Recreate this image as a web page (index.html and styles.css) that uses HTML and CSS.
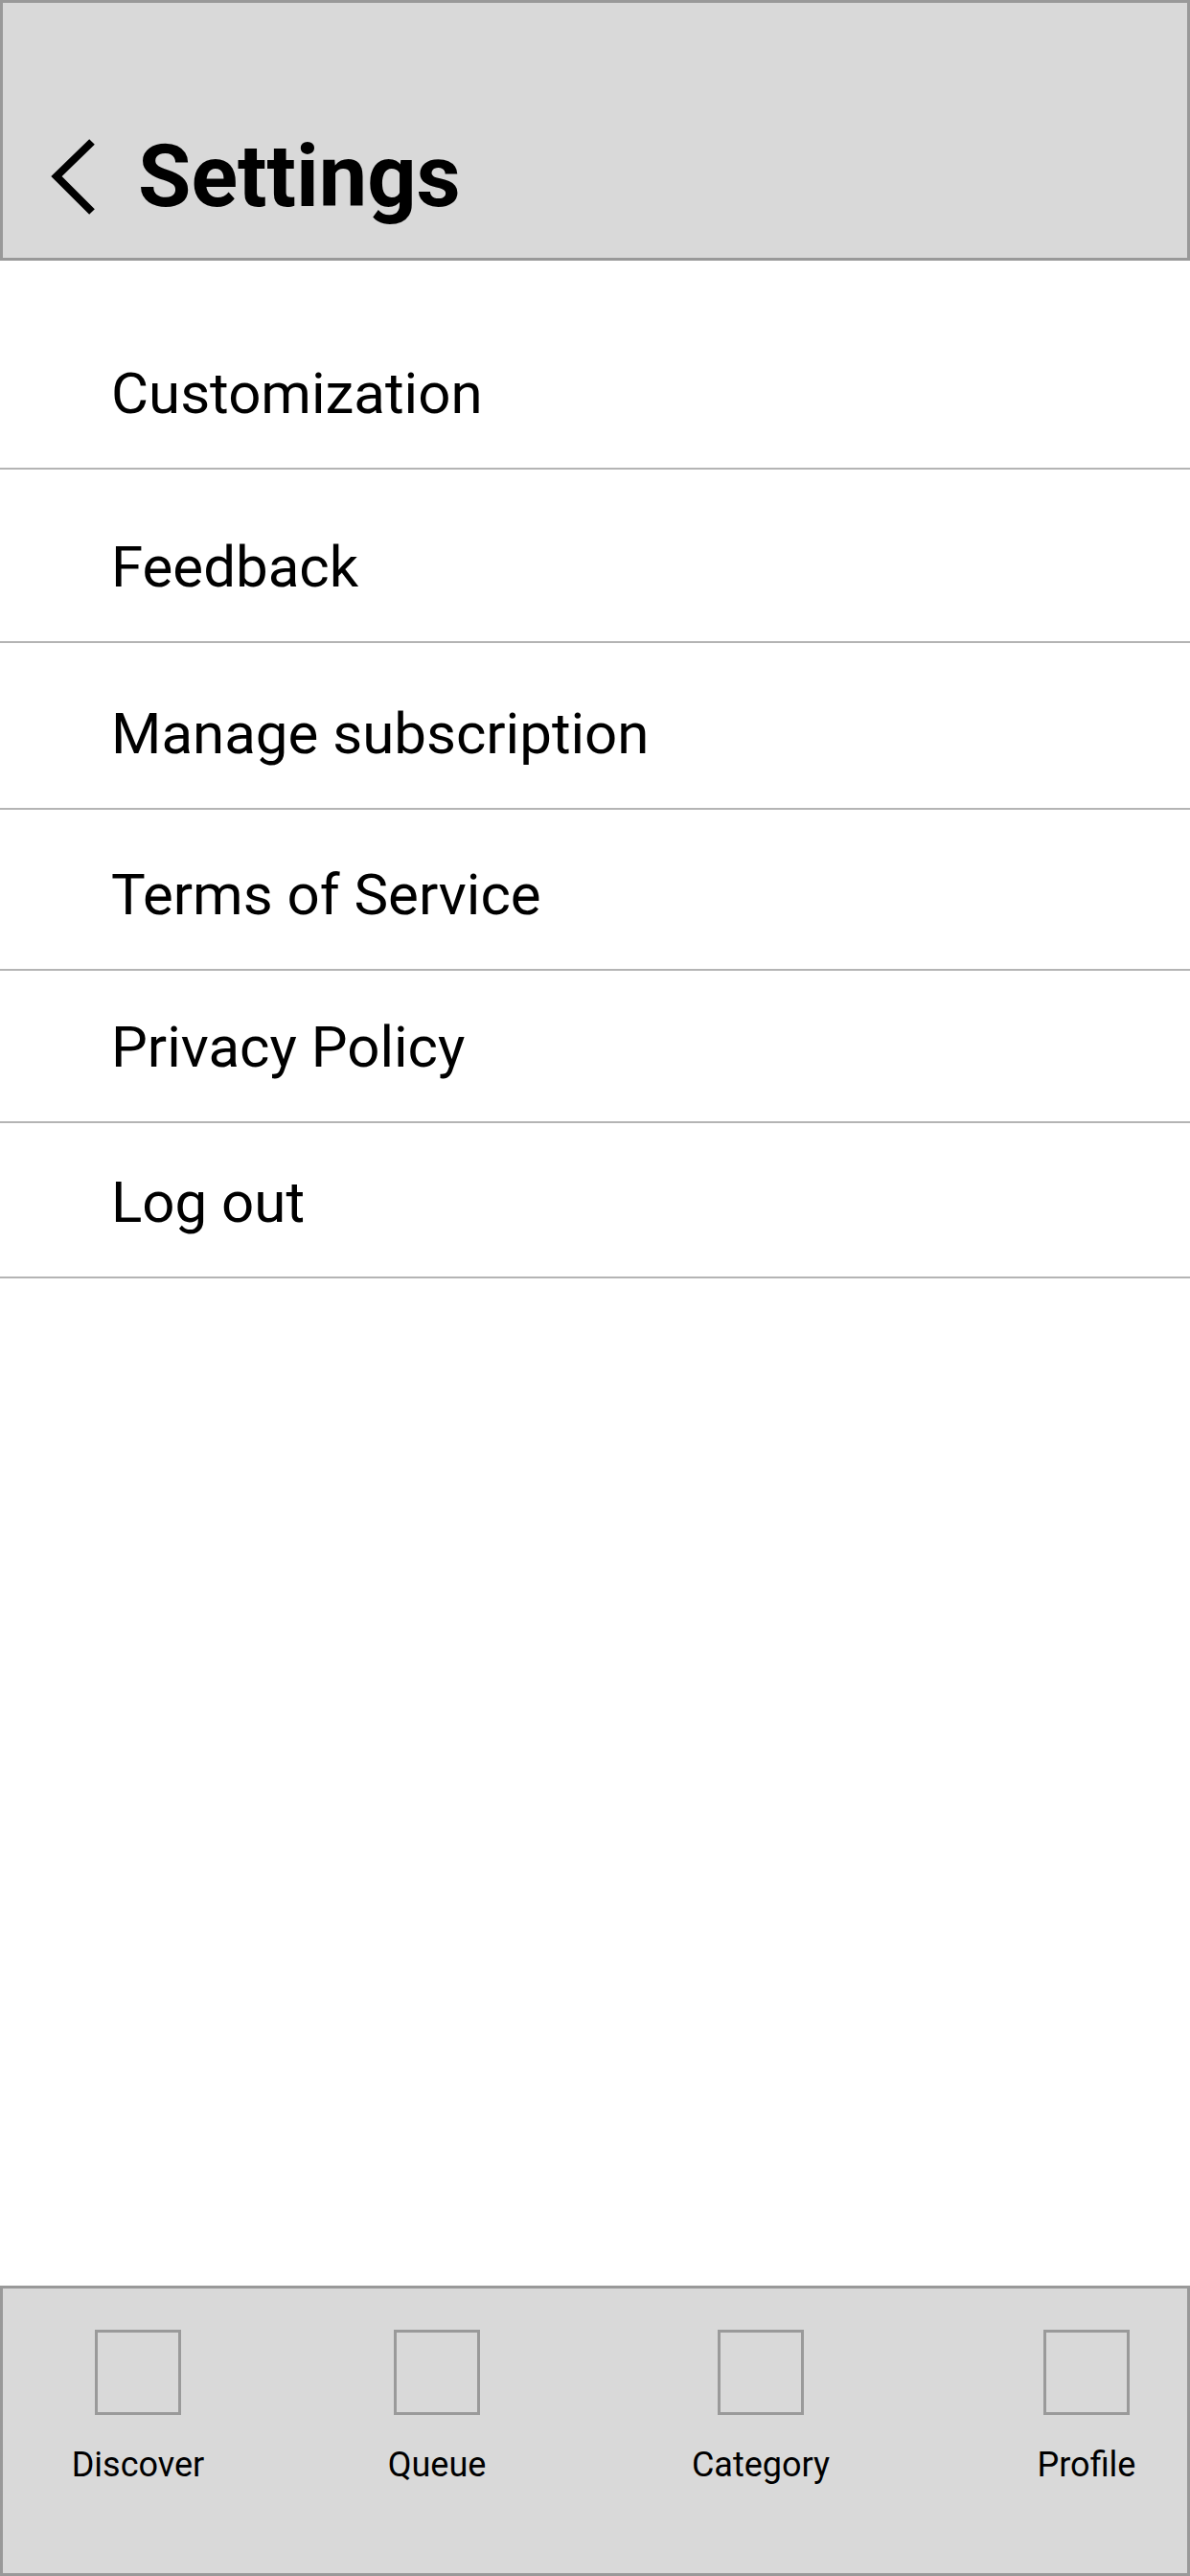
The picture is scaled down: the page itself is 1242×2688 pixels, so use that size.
FILE: index.html
```html
<!DOCTYPE html>
<html lang="en">
<head>
<meta charset="utf-8">
<title>Settings</title>
<link rel="stylesheet" href="styles.css">
</head>
<body>
<div class="screen">
  <header class="topbar">
    <svg class="back" viewBox="0 0 52 84" width="52" height="84" aria-hidden="true">
      <path d="M48 5 L11 41 L48 78" fill="none" stroke="#000" stroke-width="8" stroke-linecap="butt" stroke-linejoin="miter"/>
    </svg>
    <h1 class="title">Settings</h1>
  </header>
  <main class="content">
    <ul class="menu">
      <li class="menu-item menu-item--1">Customization</li>
      <li class="menu-item menu-item--2">Feedback</li>
      <li class="menu-item menu-item--3">Manage subscription</li>
      <li class="menu-item menu-item--4">Terms of Service</li>
      <li class="menu-item menu-item--5">Privacy Policy</li>
      <li class="menu-item menu-item--6">Log out</li>
    </ul>
  </main>
  <nav class="tabbar">
    <div class="tab"><span class="tab-icon"></span><span class="tab-label">Discover</span></div>
    <div class="tab"><span class="tab-icon"></span><span class="tab-label">Queue</span></div>
    <div class="tab"><span class="tab-icon"></span><span class="tab-label">Category</span></div>
    <div class="tab tab--last"><span class="tab-icon"></span><span class="tab-label">Profile</span></div>
  </nav>
</div>
</body>
</html>
```
FILE: styles.css
```css
* { box-sizing: border-box; }
html, body {
  margin: 0;
  padding: 0;
  background: #ffffff;
}
body {
  font-family: Roboto, "Liberation Sans", Arial, sans-serif;
  color: #000;
}
.screen {
  width: 1242px;
  height: 2688px;
  display: flex;
  flex-direction: column;
}
.topbar {
  height: 272px;
  flex: 0 0 auto;
  background: #d9d9d9;
  border: 3px solid #999999;
  display: flex;
  align-items: flex-end;
  padding: 0 0 42px 45px;
}
.back {
  display: block;
  flex: 0 0 auto;
  margin-right: 44px;
}
.title {
  margin: 0;
  font-size: 90px;
  line-height: 84px;
  font-weight: 700;
  letter-spacing: 0;
}
.content {
  flex: 1 1 auto;
}
.menu {
  list-style: none;
  margin: 0;
  padding: 0;
}
.menu-item {
  font-size: 60px;
  line-height: 70px;
  padding-left: 116px;
  padding-bottom: 42px;
  border-bottom: 2px solid #b4b4b4;
}
.menu-item--1 { padding-top: 104px; }
.menu-item--2 { padding-top: 67px; }
.menu-item--3 { padding-top: 60px; }
.menu-item--4 { padding-top: 54px; }
.menu-item--5 { padding-top: 45px; }
.menu-item--6 { padding-top: 48px; }
.tabbar {
  flex: 0 0 auto;
  height: 303px;
  background: #d9d9d9;
  border: 3px solid #999999;
  display: grid;
  grid-template-columns: 282px 342px 334px 1fr;
  align-items: start;
  padding-top: 43px;
}
.tab {
  width: 200px;
  justify-self: center;
  display: flex;
  flex-direction: column;
  align-items: center;
}
.tab--last {
  justify-self: end;
  margin-right: 5px;
}
.tab-icon {
  display: block;
  width: 90px;
  height: 89px;
  border: 3px solid #9a9a9a;
}
.tab-label {
  margin-top: 31px;
  font-size: 36px;
  line-height: 42px;
  white-space: nowrap;
}
```
